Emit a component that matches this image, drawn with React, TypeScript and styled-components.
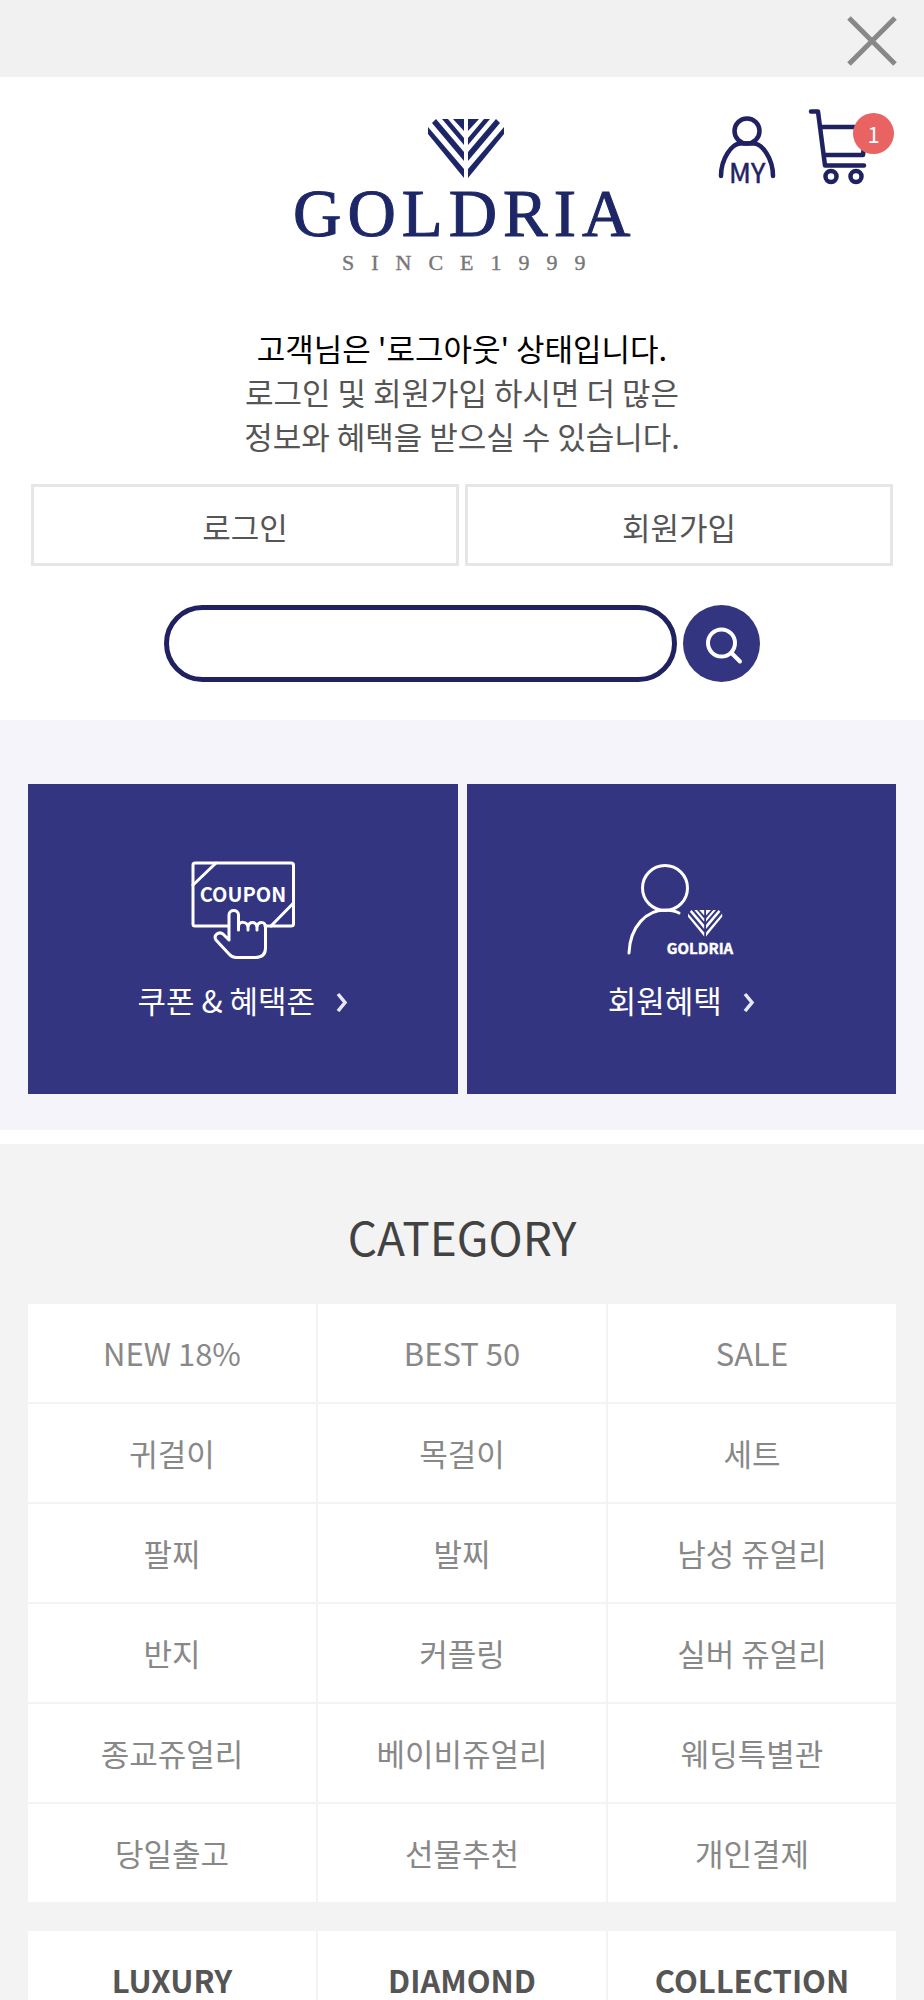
import React from "react";
import styled, { createGlobalStyle } from "styled-components";

const navy = "#1f2161";
const indigo = "#343581";

const GlobalStyle = createGlobalStyle`
  * { box-sizing: border-box; }
  body {
    margin: 0;
    background: #fff;
    color: #555;
    font-family: "Noto Sans CJK KR", sans-serif;
    font-size: 31px;
    line-height: 44px;
  }
  a { color: inherit; text-decoration: none; }
  button, input { font: inherit; }
  svg { display: block; flex: none; }
`;

const TopBar = styled.div`
  display: flex;
  align-items: center;
  justify-content: flex-end;
  height: 77px;
  padding: 4px 24px 0;
  background: #f1f1f1;
`;

const IconButton = styled.button`
  padding: 0;
  border: 0;
  background: none;
  cursor: pointer;
`;

const Header = styled.header`
  display: grid;
  grid-template-columns: 1fr auto 1fr;
  padding: 32px 30px 0;
  align-items: start;
`;

const LogoLink = styled.a`
  grid-column: 2;
  padding-top: 8px;
`;

const Shortcuts = styled.nav`
  display: flex;
  justify-content: flex-end;
  gap: 32px;
`;

const CartLink = styled.a`
  position: relative;
  padding-right: 26px;
`;

const Badge = styled.span`
  position: absolute;
  top: 4px;
  right: 0;
  width: 41px;
  height: 41px;
  border-radius: 50%;
  background: #e96363;
  color: #fff;
  font-size: 22px;
  line-height: 40px;
  text-align: center;
`;

const Greeting = styled.p`
  margin: 45px 31px 0;
  text-align: center;
`;

const GreetingLine = styled.span<{ $strong?: boolean }>`
  display: block;
  color: ${(p) => (p.$strong ? "#000" : "#555")};
`;

const AccountRow = styled.div`
  display: grid;
  grid-template-columns: 1fr 1fr;
  gap: 6px;
  margin: 26px 31px 0;
`;

const AccountLink = styled.a`
  height: 82px;
  border: 3px solid #e6e6e6;
  line-height: 80px;
  text-align: center;
`;

const SearchForm = styled.form`
  display: flex;
  justify-content: center;
  gap: 6px;
  padding: 39px 31px 38px;
`;

const SearchInput = styled.input`
  width: 60%;
  max-width: 513px;
  height: 77px;
  padding: 0 32px;
  border: 5px solid ${navy};
  border-radius: 39px;
  background: #fff;
  outline: 0;
`;

const SearchButton = styled.button`
  display: grid;
  place-items: center;
  width: 77px;
  height: 77px;
  padding: 0;
  border: 0;
  border-radius: 50%;
  background: ${indigo};
  cursor: pointer;
`;

const Promos = styled.section`
  display: grid;
  grid-template-columns: 1fr 1fr;
  gap: 9px;
  padding: 64px 28px 36px;
  background: #f4f4fa;
`;

const PromoCard = styled.a`
  display: flex;
  flex-direction: column;
  align-items: center;
  height: 310px;
  padding-top: 76px;
  background: ${indigo};
  color: #fff;
`;

const PromoLabel = styled.span`
  display: flex;
  align-items: center;
  gap: 21px;
  margin-top: 19px;
  svg { margin-top: 4px; }
`;

const Category = styled.section`
  margin-top: 14px;
  padding: 57px 28px 29px;
  background: #f3f3f3;
`;

const CategoryTitle = styled.h2`
  margin: 0 0 33px;
  color: #424242;
  font-size: 46px;
  font-weight: 400;
  line-height: 70px;
  text-align: center;
`;

const CategoryGrid = styled.nav`
  display: grid;
  grid-template-columns: repeat(3, 1fr);
  gap: 2px;
  & + & { margin-top: 29px; }
`;

const CategoryLink = styled.a<{ $strong?: boolean }>`
  height: 98px;
  background: #fff;
  color: ${(p) => (p.$strong ? "#555" : "#888")};
  font-weight: ${(p) => (p.$strong ? 700 : 400)};
  line-height: 97px;
  text-align: center;
`;

const Gem = () => (
  <>
    <path d="M0 8 L36 50 V59 L0 15Z" />
    <path d="M8 0 L36 33 V42 L4 4Z" />
    <path d="M14 0 H20 L36 19 V26Z" />
    <path d="M25 0 H36 V12Z" />
    <path d="M76 8 L40 50 V59 L76 15Z" />
    <path d="M68 0 L40 33 V42 L72 4Z" />
    <path d="M62 0 H56 L40 19 V26Z" />
    <path d="M51 0 H40 V12Z" />
  </>
);

const Logo = () => (
  <svg width="364" height="164" viewBox="0 0 364 164" role="img" aria-label="GOLDRIA SINCE 1999">
    <g transform="translate(148 2)" fill="#1d2767"><Gem /></g>
    <text x="13" y="119" fontFamily="Liberation Serif, serif" fontSize="67" letterSpacing="6" fill="#1d2767" stroke="#1d2767">GOLDRIA</text>
    <text x="62" y="153" fontFamily="Liberation Serif, serif" fontSize="22" letterSpacing="17" fill="#777" stroke="#777" strokeWidth="0.4">SINCE1999</text>
  </svg>
);

const MyIcon = () => (
  <svg width="58" height="88" viewBox="0 0 58 88" fill="none" stroke={navy} strokeWidth="4.500" strokeLinecap="round">
    <circle cx="29" cy="22" r="12.5" />
    <path d="M3 67 C3 49 14 35 22 34.500 H36 C44 35 55 49 55 67" />
    <text x="11" y="74" fontSize="27" fontFamily="Noto Sans CJK KR, sans-serif" fill={navy} strokeWidth="0.5">MY</text>
  </svg>
);

const CartIcon = () => (
  <svg width="60" height="76" viewBox="0 0 60 76" fill="none" stroke={navy} strokeWidth="4.500" strokeLinecap="round" strokeLinejoin="round">
    <path d="M3 2.500 H10 L17 56.500 H56" />
    <path d="M13 18 H58 L55 46 H16" />
    <circle cx="23" cy="67.500" r="5.500" />
    <circle cx="48" cy="67.500" r="5.500" />
  </svg>
);

const CouponIcon = () => (
  <svg width="104" height="99" viewBox="0 0 104 99" fill="none" stroke="#fff" strokeWidth="3" strokeLinejoin="round" strokeLinecap="round">
    <path d="M37 66 H4 Q2 66 2 64 V5 Q2 3 4 3 H100 Q102.500 3 102.500 5 V64 Q102.500 66 100 66 H74" />
    <path d="M2 25 L25 3 M80 66 L102.500 43" />
    <text x="52" y="42" textAnchor="middle" fontSize="20" fontWeight="700" fontFamily="Noto Sans CJK KR, sans-serif" fill="#fff" stroke="none">COUPON</text>
    <path d="M38 80 V55 C38 49 47.500 49 47.500 55 V70 M47.500 66 C48 61 56 61 57 67 V70 M57 67 C58 61 65 61 66 67 V70 M66 67 C67 61 74.500 61 74.500 67 V88 Q74.500 97 65 97.500 H45 Q41 97.500 38 94 L25 80 C22 75 28 71 32 74 L38 80" />
  </svg>
);

const MemberIcon = () => (
  <svg width="110" height="99" viewBox="0 0 110 99" fill="none" stroke="#fff" strokeWidth="3" strokeLinecap="round">
    <circle cx="39" cy="28" r="22.500" />
    <path d="M3 93 C4 66 21 50 39 50 Q47 50 53 53" />
    <g transform="translate(62 50) scale(.45)" fill="#fff" stroke="none"><Gem /></g>
    <text x="74" y="94" textAnchor="middle" fontSize="15" fontWeight="700" fontFamily="Noto Sans CJK KR, sans-serif" fill="#fff" stroke="#fff" strokeWidth="0.4">GOLDRIA</text>
  </svg>
);

const Chevron = () => (
  <svg width="12" height="20" viewBox="0 0 12 20" fill="none" stroke="#e8e8f4" strokeWidth="3.500">
    <path d="M2 2 L9 10.500 L2 19" />
  </svg>
);

const categories = [
  "NEW 18%", "BEST 50", "SALE",
  "귀걸이", "목걸이", "세트",
  "팔찌", "발찌", "남성 쥬얼리",
  "반지", "커플링", "실버 쥬얼리",
  "종교쥬얼리", "베이비쥬얼리", "웨딩특별관",
  "당일출고", "선물추천", "개인결제",
];
const collections = ["LUXURY", "DIAMOND", "COLLECTION"];

export default function App() {
  return (
    <>
      <GlobalStyle />
      <TopBar>
        <IconButton type="button" aria-label="닫기">
          <svg width="56" height="56" viewBox="0 0 56 56" stroke="#888" strokeWidth="5">
            <path d="M5 5 L51 51 M51 5 L5 51" />
          </svg>
        </IconButton>
      </TopBar>
      <Header>
        <LogoLink href="#"><Logo /></LogoLink>
        <Shortcuts>
          <a href="#" aria-label="마이페이지"><MyIcon /></a>
          <CartLink href="#" aria-label="장바구니">
            <CartIcon />
            <Badge>1</Badge>
          </CartLink>
        </Shortcuts>
      </Header>
      <Greeting>
        <GreetingLine $strong>고객님은 '로그아웃' 상태입니다.</GreetingLine>
        <GreetingLine>로그인 및 회원가입 하시면 더 많은</GreetingLine>
        <GreetingLine>정보와 혜택을 받으실 수 있습니다.</GreetingLine>
      </Greeting>
      <AccountRow>
        <AccountLink href="#">로그인</AccountLink>
        <AccountLink href="#">회원가입</AccountLink>
      </AccountRow>
      <SearchForm role="search">
        <SearchInput type="text" aria-label="검색어" />
        <SearchButton type="button" aria-label="검색">
          <svg width="42" height="42" viewBox="0 0 42 42" fill="none" stroke="#fff" strokeWidth="4" strokeLinecap="round">
            <circle cx="20.500" cy="20" r="13.500" />
            <path d="M31 30.500 L39 38.500" />
          </svg>
        </SearchButton>
      </SearchForm>
      <Promos>
        <PromoCard href="#">
          <CouponIcon />
          <PromoLabel>쿠폰 &amp; 혜택존<Chevron /></PromoLabel>
        </PromoCard>
        <PromoCard href="#">
          <MemberIcon />
          <PromoLabel>회원혜택<Chevron /></PromoLabel>
        </PromoCard>
      </Promos>
      <Category>
        <CategoryTitle>CATEGORY</CategoryTitle>
        <CategoryGrid>
          {categories.map((name) => (
            <CategoryLink href="#" key={name}>{name}</CategoryLink>
          ))}
        </CategoryGrid>
        <CategoryGrid>
          {collections.map((name) => (
            <CategoryLink href="#" key={name} $strong>{name}</CategoryLink>
          ))}
        </CategoryGrid>
      </Category>
    </>
  );
}
